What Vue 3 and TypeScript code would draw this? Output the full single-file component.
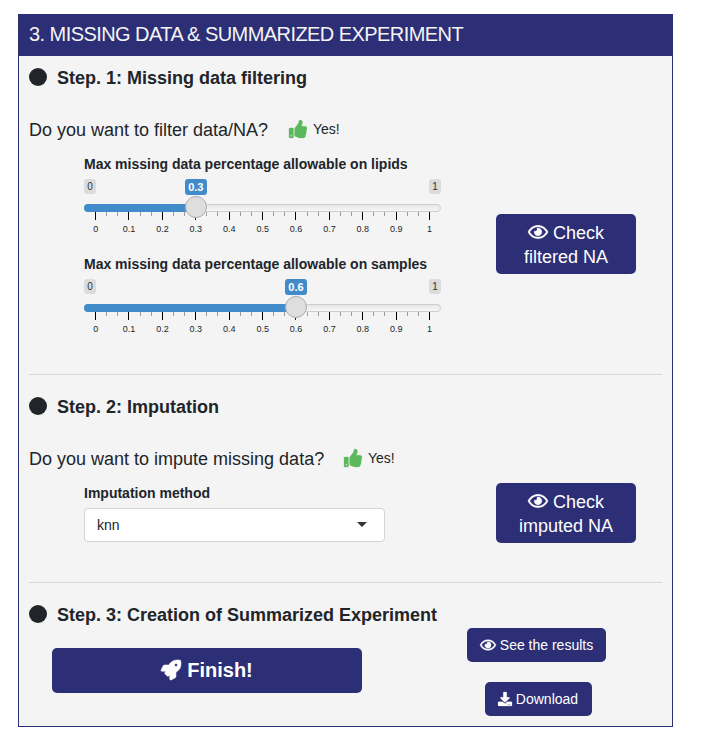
<script setup lang="ts">
import { ref } from 'vue'

interface Slider {
  id: string
  label: string
  value: number
}

const sliders = ref<Slider[]>([
  { id: 'lipids', label: 'Max missing data percentage allowable on lipids', value: 0.3 },
  { id: 'samples', label: 'Max missing data percentage allowable on samples', value: 0.6 },
])

const gridLabels = ['0', '0.1', '0.2', '0.3', '0.4', '0.5', '0.6', '0.7', '0.8', '0.9', '1']
const ticks = Array.from({ length: 31 }, (_, i) => ({
  x: Math.round(11 + (i * 334) / 30),
  major: i % 3 === 0,
}))

const center = (value: number): string => `${(11.6 + value * 334).toFixed(1)}px`

const eyePath =
  'M288 144a110.94 110.94 0 0 0-31.24 5 55.4 55.4 0 0 1 7.24 27 56 56 0 0 1-56 56 55.4 55.4 0 0 1-27-7.24A111.71 111.71 0 1 0 288 144zm284.52 97.4C518.29 135.59 410.92 64 288 64S57.68 135.64 3.48 241.41a32.35 32.35 0 0 0 0 29.19C57.71 376.41 165.08 448 288 448s230.32-71.64 284.52-177.41a32.35 32.35 0 0 0 0-29.19zM288 400c-98.65 0-189.09-55-237.93-144C98.91 167 189.34 112 288 112s189.09 55 237.93 144C477.1 345 386.66 400 288 400z'
const thumbPath =
  'M104 224H24c-13.255 0-24 10.745-24 24v240c0 13.255 10.745 24 24 24h80c13.255 0 24-10.745 24-24V248c0-13.255-10.745-24-24-24zM64 472c-13.255 0-24-10.745-24-24s10.745-24 24-24 24 10.745 24 24-10.745 24-24 24zM384 81.452c0 42.416-25.97 66.208-33.277 94.548h101.723c33.397 0 59.397 27.746 59.553 58.098.084 17.938-7.546 37.249-19.439 49.197l-.11.11c9.836 23.337 8.237 56.037-9.308 79.469 8.681 25.895-.069 57.704-16.382 74.757 4.298 17.598 2.244 32.575-6.148 44.632C440.202 511.587 389.616 512 346.839 512l-2.845-.001c-48.287-.017-87.806-17.598-119.56-31.725-15.957-7.099-36.821-15.887-52.651-16.178-6.54-.12-11.783-5.457-11.783-11.998v-213.77c0-3.2 1.282-6.271 3.558-8.521 39.614-39.144 56.648-80.587 89.117-113.111 14.804-14.832 20.188-37.236 25.393-58.902C282.515 39.293 291.817 0 312 0c24 0 72 8 72 81.452z'
const rocketPath =
  'M505.12 19.094c-1.19-5.531-6.658-11-12.207-12.188C460.716 0 435.507 0 410.407 0 307.175 0 245.269 55.203 199.052 128H94.838c-16.348.016-35.557 11.875-42.887 26.484L2.516 253.297A28.4 28.4 0 0 0 0 264a24.009 24.009 0 0 0 24.006 24h103.81l-22.474 22.469c-11.365 11.361-12.996 32.258 0 45.25l50.904 50.906c11.156 11.188 32.156 13.156 45.277 0l22.475-22.469V488a24.009 24.009 0 0 0 24.006 24 28.559 28.559 0 0 0 10.707-2.516l98.728-49.39c14.629-7.297 26.508-26.5 26.508-42.86V312.797c72.598-46.313 128.035-108.406 128.035-211.094.093-25.203.093-50.406-6.862-82.609zM384.04 168a40 40 0 1 1 40.01-40 40.023 40.023 0 0 1-40.01 40z'
const downloadPath =
  'M216 0h80c13.3 0 24 10.7 24 24v168h87.7c17.8 0 26.7 21.5 14.1 34.1L269.7 378.3c-7.5 7.5-19.8 7.5-27.3 0L90.1 226.1c-12.6-12.6-3.7-34.1 14.1-34.1H192V24c0-13.3 10.7-24 24-24zm296 376v112c0 13.3-10.7 24-24 24H24c-13.3 0-24-10.7-24-24V376c0-13.3 10.7-24 24-24h146.7l49 49c20.1 20.1 52.5 20.1 72.6 0l49-49H488c13.3 0 24 10.7 24 24zm-124 88c0-11-9-20-20-20s-20 9-20 20 9 20 20 20 20-9 20-20zm64 0c0-11-9-20-20-20s-20 9-20 20 9 20 20 20 20-9 20-20z'
</script>

<template>
  <main class="panel">
    <header class="panel-header">3. MISSING DATA &amp; SUMMARIZED EXPERIMENT</header>

    <section class="step step-filter">
      <h2 class="step-title"><span class="dot"></span><span>Step. 1: Missing data filtering</span></h2>
      <div class="question">
        <span class="ask">Do you want to filter data/NA?</span>
        <svg class="thumb" viewBox="0 0 512 512"><path :d="thumbPath" /></svg>
        <span class="yes">Yes!</span>
      </div>
      <div class="columns">
        <div class="sliders">
          <div v-for="s in sliders" :key="s.id" class="slider">
            <div class="field-label">{{ s.label }}</div>
            <div class="badges">
              <span class="bound">0</span>
              <span class="bound">1</span>
              <span class="current" :style="{ left: center(s.value) }">{{ s.value }}</span>
            </div>
            <div class="track">
              <div class="fill" :style="{ width: center(s.value) }"></div>
              <div class="handle" :style="{ left: center(s.value) }"></div>
            </div>
            <svg class="ticks" width="357" height="8" shape-rendering="crispEdges">
              <rect
                v-for="t in ticks"
                :key="t.x"
                :x="t.x"
                y="0"
                width="1"
                :height="t.major ? 8 : 4"
                :fill="t.major ? '#000' : '#999'"
              />
            </svg>
            <div class="grid-labels">
              <span v-for="g in gridLabels" :key="g">{{ g }}</span>
            </div>
          </div>
        </div>
        <button class="btn btn-check">
          <span class="line"><svg class="eye" viewBox="0 0 576 512"><path :d="eyePath" /></svg>Check</span>
          <span class="line">filtered NA</span>
        </button>
      </div>
    </section>

    <section class="step step-impute">
      <h2 class="step-title"><span class="dot"></span><span>Step. 2: Imputation</span></h2>
      <div class="question">
        <span class="ask ask-impute">Do you want to impute missing data?</span>
        <svg class="thumb" viewBox="0 0 512 512"><path :d="thumbPath" /></svg>
        <span class="yes">Yes!</span>
      </div>
      <div class="columns">
        <div class="method">
          <div class="field-label">Imputation method</div>
          <div class="select"><span>knn</span><i class="caret"></i></div>
        </div>
        <button class="btn btn-check">
          <span class="line"><svg class="eye" viewBox="0 0 576 512"><path :d="eyePath" /></svg>Check</span>
          <span class="line">imputed NA</span>
        </button>
      </div>
    </section>

    <section class="step-create">
      <div class="create-main">
        <h2 class="step-title"><span class="dot"></span><span>Step. 3: Creation of Summarized Experiment</span></h2>
        <button class="btn btn-finish">
          <svg class="rocket" viewBox="0 0 512 512"><path :d="rocketPath" /></svg>
          <span>Finish!</span>
        </button>
      </div>
      <div class="create-side">
        <button class="btn btn-small">
          <svg class="eye-small" viewBox="0 0 576 512"><path :d="eyePath" /></svg>
          <span>See the results</span>
        </button>
        <button class="btn btn-small btn-download">
          <svg class="dl" viewBox="0 0 512 512"><path :d="downloadPath" /></svg>
          <span>Download</span>
        </button>
      </div>
    </section>
  </main>
</template>

<style>
body {
  background: #fff;
}
</style>

<style scoped>
* {
  box-sizing: border-box;
}
.panel {
  width: 655px;
  height: 713px;
  margin: 14px 0 0 18px;
  border: 1px solid #2c2e76;
  background: #f4f4f4;
  color: #212529;
  font-family: 'Liberation Sans', Arial, sans-serif;
  display: flow-root;
  white-space: nowrap;
}
.panel-header {
  height: 41px;
  padding-left: 10px;
  background: #2c2e76;
  color: #f4f4f4;
  font-size: 20px;
  letter-spacing: -0.56px;
  line-height: 39px;
}
.step {
  margin: 0 10px;
  border-bottom: 1px solid #d8d8d8;
}
.step-filter {
  height: 319px;
  padding-top: 10px;
}
.step-impute {
  height: 208px;
  padding-top: 20px;
}
.step-title {
  display: flex;
  align-items: center;
  gap: 10px;
  height: 24px;
  margin: 0;
  font-size: 18px;
  font-weight: 700;
  line-height: 24px;
}
.dot {
  width: 18px;
  height: 18px;
  margin-bottom: 2px;
  border-radius: 50%;
  background: #212529;
}
.question {
  display: flex;
  align-items: center;
  height: 24px;
  margin-top: 28px;
}
.ask {
  width: 260px;
  font-size: 18px;
}
.ask-impute {
  width: 315px;
}
.thumb {
  width: 18px;
  height: 18px;
  margin-bottom: 2px;
  fill: #5cb85c;
  stroke: #5cb85c;
  stroke-width: 8;
  overflow: visible;
}
.yes {
  margin: 0 0 2px 6px;
  font-size: 14px;
}
.columns {
  display: flex;
  justify-content: space-between;
  align-items: flex-start;
  padding: 12px 26px 0 55px;
}
.field-label {
  height: 21px;
  font-size: 14px;
  font-weight: 700;
  line-height: 21px;
}
.slider {
  width: 357px;
  height: 100px;
}
.badges {
  position: relative;
  display: flex;
  justify-content: space-between;
  height: 25px;
  padding-top: 4px;
}
.bound {
  width: 12px;
  height: 15px;
  border-radius: 3px;
  background: #dcdcdc;
  color: #333;
  font-size: 10px;
  line-height: 16px;
  text-align: center;
}
.current {
  position: absolute;
  top: 4px;
  width: 22px;
  height: 16px;
  border-radius: 3px;
  background: #428bca;
  color: #fff;
  font-size: 11px;
  font-weight: 700;
  line-height: 16px;
  text-align: center;
  transform: translateX(-50%);
}
.track {
  position: relative;
  height: 8px;
  margin-top: 4px;
  border: 1px solid #ccc;
  border-radius: 8px;
  background: linear-gradient(to bottom, #dedede -50%, #fff 150%);
}
.fill {
  height: 8px;
  margin: -1px 0 0 -1px;
  border-radius: 8px 0 0 8px;
  background: #428bca;
}
.handle {
  position: absolute;
  top: -9px;
  width: 22px;
  height: 22px;
  margin-left: -12px;
  border: 1px solid #ababab;
  border-radius: 50%;
  background: #dedede;
  box-shadow: 1px 1px 3px rgba(255, 255, 255, 0.3);
}
.ticks {
  display: block;
}
.grid-labels {
  display: flex;
  width: 367px;
  margin: 3px 0 0 -5px;
  font-size: 9px;
  line-height: 12px;
}
.grid-labels span {
  width: 33.4px;
  flex: none;
  text-align: center;
}
.btn {
  display: flex;
  align-items: center;
  justify-content: center;
  margin: 0;
  padding: 0;
  border: 0;
  border-radius: 5px;
  background: #2c2e76;
  color: #fff;
  font-family: inherit;
}
.btn svg {
  fill: #fff;
  stroke: #fff;
  stroke-width: 8;
  overflow: visible;
}
.btn-check {
  flex-direction: column;
  width: 140px;
  height: 60px;
  margin-top: 60px;
  padding-top: 2px;
  font-size: 18px;
}
.step-impute .btn-check {
  margin-top: 0;
}
.line {
  display: flex;
  align-items: center;
  height: 24px;
}
.eye {
  width: 20px;
  height: 18px;
  margin: 0 5px 2px 0;
}
.select {
  display: flex;
  align-items: center;
  justify-content: space-between;
  width: 301px;
  height: 34px;
  margin-top: 4px;
  padding: 0 17px 0 12px;
  border: 1px solid #ced4da;
  border-radius: 4px;
  background: #fff;
  font-size: 14px;
}
.caret {
  margin-bottom: 2px;
  border: 5px solid transparent;
  border-top-color: #333;
  border-bottom: 0;
}
.step-create {
  display: flex;
  padding: 20px 10px 0;
}
.create-main {
  width: 438px;
}
.btn-finish {
  gap: 6px;
  width: 310px;
  height: 45px;
  margin: 21px 0 0 23px;
  font-size: 20px;
  font-weight: 700;
}
.btn .rocket {
  width: 20px;
  height: 20px;
  margin-bottom: 2px;
  stroke-width: 14;
}
.create-side {
  display: flex;
  flex-direction: column;
  align-items: center;
  gap: 20px;
  padding-top: 25px;
}
.btn-small {
  gap: 4px;
  width: 139px;
  height: 34px;
  font-size: 14px;
}
.btn .eye-small {
  width: 16px;
  height: 14px;
  stroke-width: 16;
}
.btn-download {
  width: 107px;
  margin-left: 3px;
}
.dl {
  width: 14px;
  height: 14px;
}
</style>
